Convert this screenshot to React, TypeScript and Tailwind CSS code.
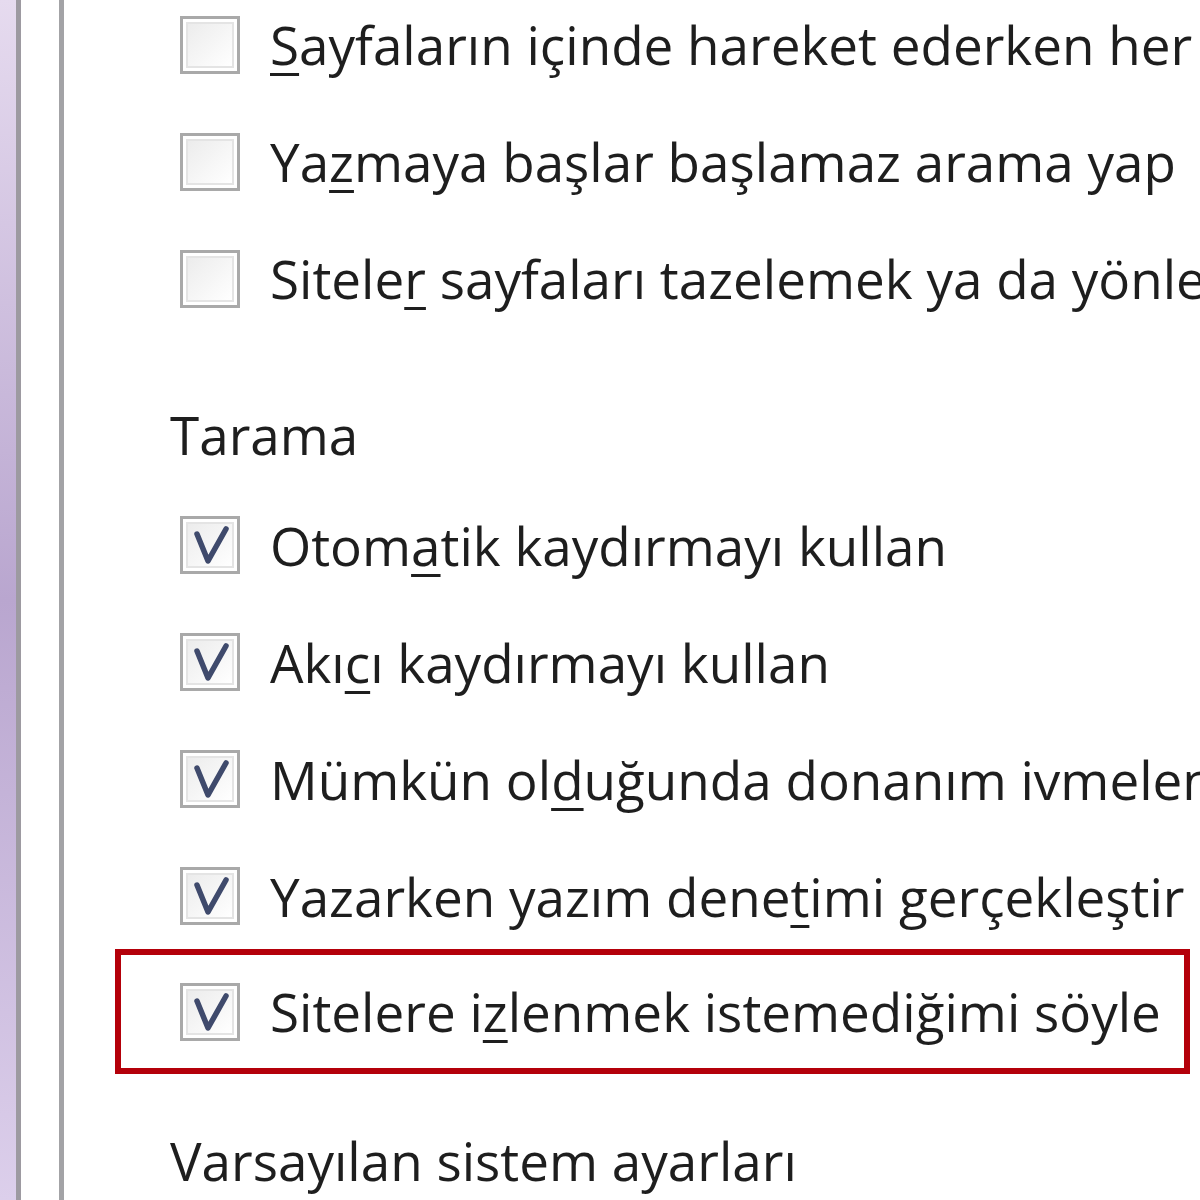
import React from "react";

const Check = ({ checked }: { checked: boolean }) => (
  <div className="relative w-[60px] h-[58px] shrink-0 border-[3px] border-[#a9a9a9] bg-white">
    <div className="absolute inset-[3px] border-[2px] border-[#e4e4e4] bg-gradient-to-br from-[#ececec] to-white" />
    {checked && (
      <svg className="absolute left-0 top-0" width="54" height="52" viewBox="0 0 54 52">
        <path d="M14 15 L25 42 L43 10" fill="none" stroke="#3f4a6c" strokeWidth="5.5" strokeLinecap="round" strokeLinejoin="round" />
      </svg>
    )}
  </div>
);

const U = ({ children }: { children: React.ReactNode }) => (
  <span className="underline decoration-[3px] underline-offset-[8px]">{children}</span>
);

const Row = ({ checked, children }: { checked: boolean; children: React.ReactNode }) => (
  <div className="h-[117px] flex items-center pl-[116px] gap-[30px] whitespace-nowrap">
    <Check checked={checked} />
    <span>{children}</span>
  </div>
);

export default function App() {
  return (
    <div
      className="w-[1200px] h-[1200px] overflow-hidden bg-white flex text-[#1e1e1e] text-[53px] leading-none"
      style={{ fontFamily: '"Open Sans", "Noto Sans", sans-serif' }}
    >
      <div className="w-[16px] h-full shrink-0 bg-gradient-to-b from-[#e6dbef] via-[#b9a6cf] to-[#dccfeb]" />
      <div className="w-[5px] h-full shrink-0 bg-[#9d9aa1]" />
      <div className="w-[38px] h-full shrink-0 bg-white" />
      <div className="w-[5px] h-full shrink-0 bg-[#a3a3a6]" />
      <div className="flex-1 min-w-0 flex flex-col">
        <div className="mt-[-14px]">
          <Row checked={false}>
            <U>S</U>ayfaların içinde hareket ederken her zaman imleç tuşlarını kullan
          </Row>
          <Row checked={false}>
            Ya<U>z</U>maya başlar başlamaz arama yap
          </Row>
          <Row checked={false}>
            Sitele<U>r</U> sayfaları tazelemek ya da yönlendirmek istediğinde beni uyar
          </Row>
        </div>
        <div className="h-[80px] mt-[58px] flex items-center pl-[106px]">Tarama</div>
        <div className="mt-[13px]">
          <Row checked={true}>
            Otom<U>a</U>tik kaydırmayı kullan
          </Row>
          <Row checked={true}>
            Akı<U>c</U>ı kaydırmayı kullan
          </Row>
          <Row checked={true}>
            Mümkün ol<U>d</U>uğunda donanım ivmelendirmesini kullan
          </Row>
          <Row checked={true}>
            Yazarken yazım dene<U>t</U>imi gerçekleştir
          </Row>
        </div>
        <div className="mt-[-6px] ml-[51px] w-[1075px] h-[128px] border-[6px] border-[#b4000a] flex items-center pl-[59px] gap-[30px] whitespace-nowrap">
          <Check checked={true} />
          <span>
            Sitelere i<U>z</U>lenmek istemediğimi söyle
          </span>
        </div>
        <div className="h-[80px] mt-[47px] flex items-center pl-[106px] whitespace-nowrap">Varsayılan sistem ayarları</div>
      </div>
    </div>
  );
}
